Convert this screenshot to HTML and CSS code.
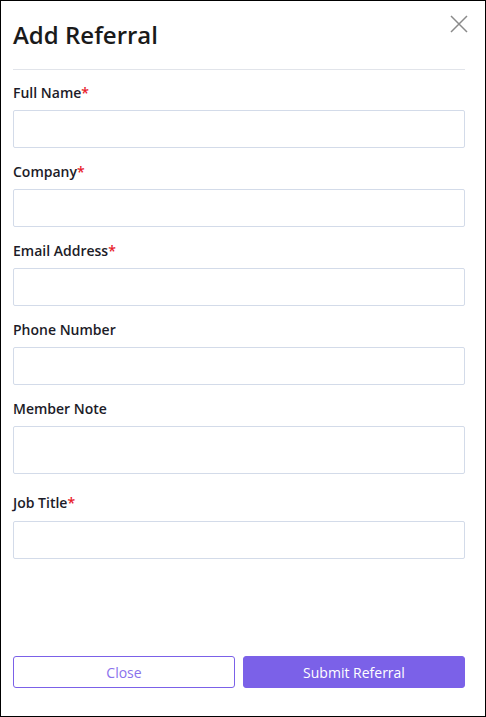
FILE: index.html
```html
<!DOCTYPE html>
<html lang="en">
<head>
<meta charset="utf-8">
<title>Add Referral</title>
<link rel="stylesheet" href="styles.css">
</head>
<body>
<div class="modal">
  <header class="modal-header">
    <h1 class="modal-title">Add Referral</h1>
    <button class="close-x" aria-label="Close">
      <svg width="20" height="20" viewBox="0 0 20 20"><path d="M2 2L18 18M18 2L2 18" stroke="#8a8a8a" stroke-width="1.5" fill="none"/></svg>
    </button>
  </header>
  <form class="modal-body">
    <div class="field">
      <label class="label">Full Name<span class="req">*</span></label>
      <input class="input" type="text">
    </div>
    <div class="field">
      <label class="label">Company<span class="req">*</span></label>
      <input class="input" type="text">
    </div>
    <div class="field">
      <label class="label">Email Address<span class="req">*</span></label>
      <input class="input" type="text">
    </div>
    <div class="field">
      <label class="label">Phone Number</label>
      <input class="input" type="text">
    </div>
    <div class="field field-note">
      <label class="label">Member Note</label>
      <textarea class="input textarea"></textarea>
    </div>
    <div class="field">
      <label class="label">Job Title<span class="req">*</span></label>
      <input class="input" type="text">
    </div>
  </form>
  <footer class="modal-footer">
    <button class="btn btn-outline">Close</button>
    <button class="btn btn-primary">Submit Referral</button>
  </footer>
</div>
</body>
</html>
```
FILE: styles.css
```css
* { box-sizing: border-box; }
html, body { margin: 0; padding: 0; }
body {
  font-family: "Open Sans", "Noto Sans", sans-serif;
  background: #fff;
  color: #1c1c28;
}
.modal {
  width: 486px;
  height: 717px;
  border: 1px solid #000;
  display: flex;
  flex-direction: column;
  padding: 0 20px 0 12px;
  position: relative;
}
.modal-header {
  padding-top: 18px;
  padding-bottom: 18px;
  border-bottom: 1px solid #e1e4ea;
}
.modal-title {
  margin: 0;
  font-size: 24px;
  line-height: 32px;
  font-weight: 600;
  color: #1a1a1a;
}
.close-x {
  position: absolute;
  top: 13px;
  right: 16px;
  width: 20px;
  height: 20px;
  padding: 0;
  border: 0;
  background: none;
  cursor: pointer;
}
.close-x svg { display: block; }
.modal-body {
  flex: 1;
  padding-top: 13px;
  display: flex;
  flex-direction: column;
  gap: 14px;
}
.field {
  display: flex;
  flex-direction: column;
}
.label {
  font-size: 14px;
  line-height: 20px;
  font-weight: 600;
  color: #1c1c28;
  margin-bottom: 7px;
}
.req { color: #e8202a; }
.input {
  height: 38px;
  width: 100%;
  border: 1px solid #d3dbe9;
  border-radius: 2px;
  font-family: inherit;
  font-size: 14px;
  padding: 6px 10px;
  background: #fff;
  margin: 0;
}
.textarea {
  height: 48px;
  resize: none;
  display: block;
  margin-bottom: 5px;
}
.field-note + .field .label { margin-bottom: 8px; }
.modal-footer {
  display: flex;
  gap: 8px;
  padding-bottom: 28px;
}
.btn {
  flex: 1;
  height: 32px;
  border-radius: 3px;
  font-family: inherit;
  font-size: 14px;
  cursor: pointer;
}
.btn-outline {
  background: #fff;
  border: 1px solid #7b61e8;
  color: #8a72ec;
}
.btn-primary {
  background: #7b61e8;
  border: 1px solid #7b61e8;
  color: #fff;
}
```
